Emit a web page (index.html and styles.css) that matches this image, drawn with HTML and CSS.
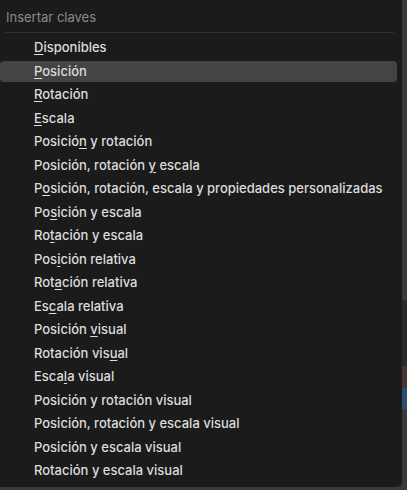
FILE: index.html
```html
<!DOCTYPE html>
<html lang="es">
<head>
<meta charset="utf-8">
<title>Insertar claves</title>
<link rel="stylesheet" href="styles.css">
</head>
<body>
<div class="menu">
  <div class="menu-title">Insertar claves</div>
  <div class="separator"></div>
  <ul class="items">
    <li class="item"><u>D</u>isponibles</li>
    <li class="item active"><u>P</u>osición</li>
    <li class="item"><u>R</u>otación</li>
    <li class="item"><u>E</u>scala</li>
    <li class="item">Posició<u>n</u> y rotación</li>
    <li class="item">Posición, rotación <u>y</u> escala</li>
    <li class="item">P<u>o</u>sición, rotación, escala y propiedades personalizadas</li>
    <li class="item">Po<u>s</u>ición y escala</li>
    <li class="item">Ro<u>t</u>ación y escala</li>
    <li class="item">Pos<u>i</u>ción relativa</li>
    <li class="item">Rot<u>a</u>ción relativa</li>
    <li class="item">Es<u>c</u>ala relativa</li>
    <li class="item">Posición <u>v</u>isual</li>
    <li class="item">Rotación vis<u>u</u>al</li>
    <li class="item">Esca<u>l</u>a visual</li>
    <li class="item">Posición y rotación visual</li>
    <li class="item">Posición, rotación y escala visual</li>
    <li class="item">Posición y escala visual</li>
    <li class="item">Rotación y escala visual</li>
  </ul>
</div>
</body>
</html>
```

FILE: styles.css
```css
html, body {
  margin: 0;
  padding: 0;
}

body {
  width: 407px;
  height: 490px;
  overflow: hidden;
  background:
    linear-gradient(to bottom,
      #3a3a3a 0, #3a3a3a 300px,
      #2a2a2a 300px, #2a2a2a 366px,
      #4a3434 366px, #4a3434 388px,
      #2c4f72 388px, #2c4f72 409px,
      #3a3a3a 409px);
  font-family: Inter, "Noto Sans", "DejaVu Sans", sans-serif;
}

.menu {
  width: 402px;
  height: 487px;
  background: #1b1b1b;
  border-radius: 0 0 5px 0;
  box-sizing: border-box;
  display: flex;
  flex-direction: column;
}

.menu-title {
  padding: 8px 0 0 6px;
  height: 24px;
  line-height: 18px;
  font-size: 13px;
  color: #8a8a8a;
}

.separator {
  height: 1px;
  margin: 0 8px 0 5px;
  background: #2f2f2f;
}

.items {
  list-style: none;
  margin: 0;
  padding: 4.25px 0 0 0;
  display: flex;
  flex-direction: column;
  gap: 2px;
}

.item {
  height: 21.5px;
  line-height: 21.5px;
  margin-right: 5px;
  padding-left: 34px;
  font-size: 13px;
  font-weight: 500;
  color: #dcdcdc;
  border-radius: 4px;
  white-space: nowrap;
}

.item u {
  text-decoration-thickness: 1px;
  text-underline-offset: 2px;
}

.item.active {
  background: #444444;
}
```
